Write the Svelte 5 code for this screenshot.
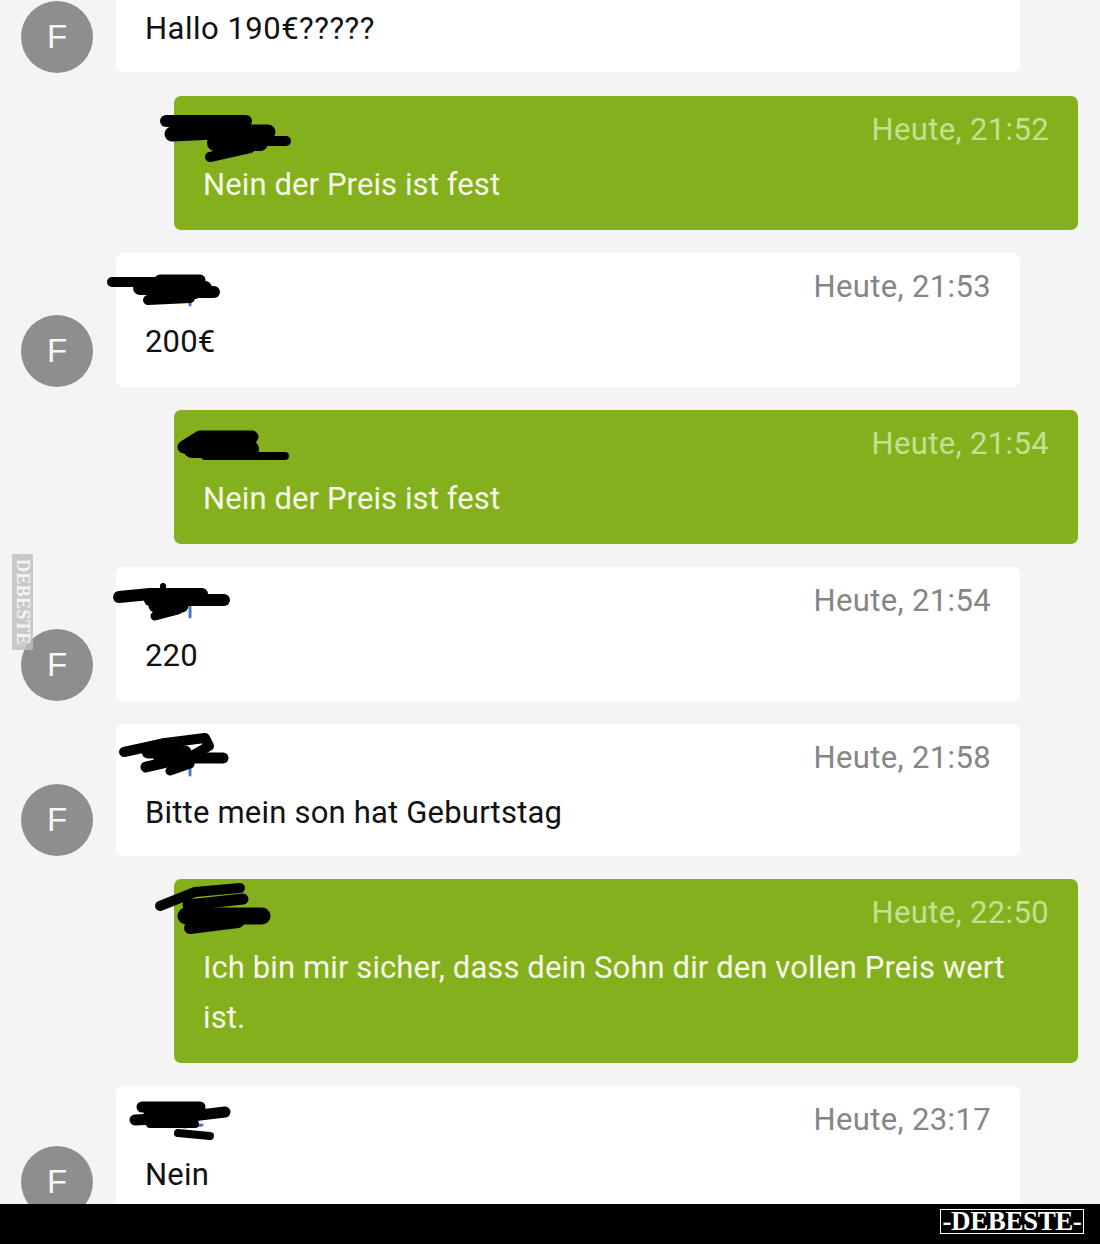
<script>
  // redaction scribbles are in page coordinates, shifted into their bubble by ox/oy
  const messages = [
    { who: "them", time: "", text: "Hallo 190€?????", first: true },
    {
      who: "me", time: "Heute, 21:52", text: "Nein der Preis ist fest", ox: 174, oy: 96,
      strokes: [
        { d: "M166 121 H246", w: 12 },
        { d: "M172 134 L215 132 H268", w: 15 },
        { d: "M215 141 H286", w: 10 },
        { d: "M215 143 H260", w: 16 },
        { d: "M210 157 L250 148", w: 10 },
      ],
    },
    {
      who: "them", time: "Heute, 21:53", text: "200€", ox: 116, oy: 253,
      tick: "M190 298 V305",
      strokes: [
        { d: "M112 282 L160 282", w: 10 },
        { d: "M160 280 H200", w: 11 },
        { d: "M140 288 H205", w: 14 },
        { d: "M175 292 H214", w: 12 },
        { d: "M148 300 L190 298", w: 10 },
        { d: "M155 293 H195", w: 12 },
      ],
    },
    {
      who: "me", time: "Heute, 21:54", text: "Nein der Preis ist fest", ox: 174, oy: 410,
      strokes: [
        { d: "M184 447 L200 437 H252", w: 13 },
        { d: "M192 449 H250", w: 18 },
        { d: "M205 456 H285", w: 8 },
      ],
    },
    {
      who: "them", time: "Heute, 21:54", text: "220", ox: 116, oy: 567,
      tick: "M190 606 V617",
      strokes: [
        { d: "M119 597 L150 594 H202", w: 12 },
        { d: "M163 586 V592", w: 6 },
        { d: "M150 600 H200 H224", w: 12 },
        { d: "M155 616 L178 610", w: 9 },
        { d: "M155 606 H182", w: 13 },
      ],
    },
    {
      who: "them", time: "Heute, 21:58", text: "Bitte mein son hat Geburtstag", tight: true, ox: 116, oy: 724,
      tick: "M190 766 V775",
      strokes: [
        { d: "M124 752 L165 743 L205 738 L209 746 L190 757", w: 10 },
        { d: "M146 767 L185 758 H223", w: 11 },
        { d: "M170 771 L190 764", w: 9 },
        { d: "M148 752 H185", w: 13 },
        { d: "M160 760 H185", w: 13 },
      ],
    },
    {
      who: "me", time: "Heute, 22:50", text: "Ich bin mir sicher, dass dein Sohn dir den vollen Preis wert ist.", ox: 174, oy: 879,
      strokes: [
        { d: "M160 906 L195 892 L240 888", w: 10 },
        { d: "M188 905 L243 899", w: 11 },
        { d: "M186 916 H262", w: 17 },
        { d: "M190 928 L238 922", w: 12 },
      ],
    },
    {
      who: "them", time: "Heute, 23:17", text: "Nein", tight: true, ox: 116, oy: 1086,
      tick: "M184 1127 L202 1125",
      strokes: [
        { d: "M142 1107 H200", w: 11 },
        { d: "M135 1120 L175 1118 L225 1112", w: 11 },
        { d: "M150 1114 H190", w: 13 },
        { d: "M150 1124 H195", w: 8 },
        { d: "M178 1133 L210 1136", w: 8 },
      ],
    },
  ];
</script>

<div class="page">
  <div class="thread">
    {#each messages as m}
      <div class="row {m.who}">
        {#if m.who === "them"}
          <div class="avatar">F</div>
        {/if}
        <div class="bubble" class:first={m.first} class:tight={m.tight}>
          {#if m.time}
            <div class="time">{m.time}</div>
          {/if}
          <div class="text">{m.text}</div>
          {#if m.strokes}
            <svg class="redact" width="200" height="100">
              <g transform="translate({-m.ox} {-m.oy})" fill="none" stroke-linecap="round" stroke-linejoin="round">
                {#if m.tick}
                  <path d={m.tick} stroke="#4a78c8" stroke-width="3" />
                {/if}
                {#each m.strokes as s}
                  <path d={s.d} stroke="#000" stroke-width={s.w} />
                {/each}
              </g>
            </svg>
          {/if}
        </div>
      </div>
    {/each}
  </div>
  <div class="side-mark">DEBESTE</div>
  <footer class="bar">
    <span class="logo">-DEBESTE-</span>
  </footer>
</div>

<style>
  :global(body) {
    margin: 0;
    background: #f4f4f4;
  }

  .page {
    position: relative;
    width: 1100px;
    height: 1244px;
    overflow: hidden;
    font-family: Roboto, "Liberation Sans", sans-serif;
    background: #f4f4f4;
  }

  .thread {
    height: 1204px;
    overflow: hidden;
    display: flex;
    flex-direction: column;
    gap: 23px;
  }

  .row {
    display: flex;
    align-items: flex-end;
    flex: none;
  }

  .row.them {
    padding-left: 21px;
    gap: 23px;
  }

  .row.me {
    padding-left: 174px;
  }

  .avatar {
    width: 72px;
    height: 72px;
    border-radius: 50%;
    background: #8e8e8e;
    color: #f8f8f8;
    font-family: "Liberation Sans", sans-serif;
    font-size: 33px;
    line-height: 72px;
    text-align: center;
    flex: none;
  }

  .bubble {
    position: relative;
    box-sizing: border-box;
    width: 904px;
    padding: 15px 29px 20px;
    background: #fff;
    border-radius: 7px;
    color: #111;
    letter-spacing: 0.2px;
  }

  .bubble.first {
    height: 72px;
    margin-bottom: 1px;
    padding-top: 4px;
    border-radius: 0 0 7px 7px;
    letter-spacing: 0.5px;
  }

  .bubble.tight {
    padding-bottom: 18px;
  }

  .me .bubble {
    background: #85b01d;
    color: #f6f9e8;
    letter-spacing: 0.1px;
  }

  .time {
    height: 37px;
    margin-bottom: 12px;
    text-align: right;
    font-size: 31px;
    line-height: 37px;
    letter-spacing: 0.35px;
    color: #858585;
  }

  .me .bubble .time {
    color: #c4e092;
    letter-spacing: 0.35px;
  }

  .text {
    padding-right: 30px;
    font-size: 31px;
    line-height: 50px;
  }

  .redact {
    position: absolute;
    left: 0;
    top: 0;
    overflow: visible;
  }

  .side-mark {
    position: absolute;
    left: 12px;
    top: 554px;
    width: 21px;
    height: 96px;
    box-sizing: border-box;
    background: rgba(190, 190, 190, 0.8);
    color: #f4f4f4;
    writing-mode: vertical-rl;
    font-family: "Liberation Serif", serif;
    font-weight: 700;
    font-size: 18px;
    line-height: 21px;
    letter-spacing: 0.4px;
    text-align: center;
  }

  .bar {
    height: 40px;
    background: #000;
    display: flex;
    align-items: flex-start;
    justify-content: flex-end;
    padding: 5px 16px 0 0;
    box-sizing: border-box;
  }

  .logo {
    box-sizing: border-box;
    width: 144px;
    height: 25px;
    border: 1px solid #fff;
    color: #fff;
    font-family: "Liberation Serif", serif;
    font-weight: 700;
    font-size: 27px;
    line-height: 23px;
    text-align: center;
    white-space: nowrap;
    letter-spacing: -0.4px;
  }
</style>
